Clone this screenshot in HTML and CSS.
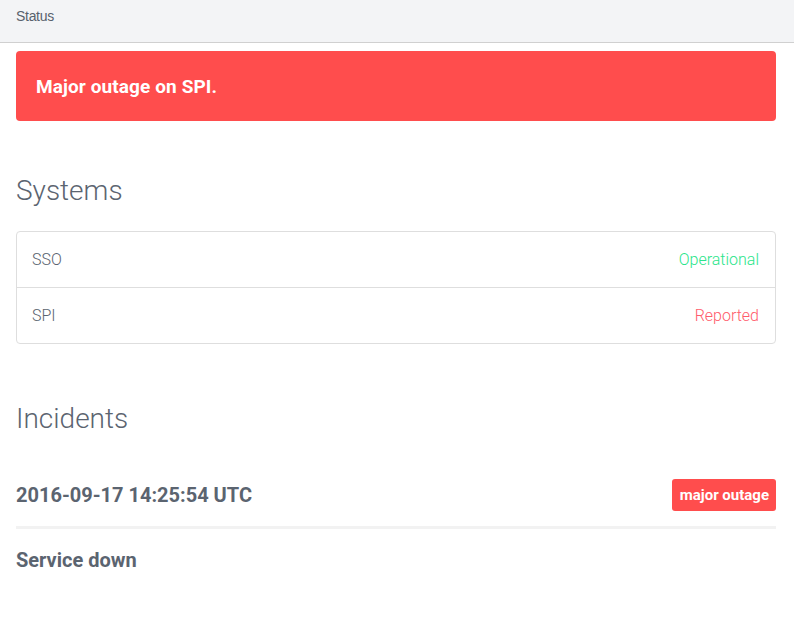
FILE: index.html
```html
<!DOCTYPE html>
<html>
<head>
<meta charset="utf-8">
<link rel="stylesheet" href="styles.css">
</head>
<body>
<header class="topbar"><span class="brand">Status</span></header>
<main class="container">
  <div class="alert">Major outage on SPI.</div>
  <h2 class="section-title systems-title">Systems</h2>
  <ul class="systems">
    <li class="system"><span class="name">SSO</span><span class="state ok">Operational</span></li>
    <li class="system"><span class="name">SPI</span><span class="state bad">Reported</span></li>
  </ul>
  <h2 class="section-title incidents-title">Incidents</h2>
  <div class="incident">
    <div class="incident-head">
      <span class="incident-date">2016-09-17 14:25:54 UTC</span>
      <span class="badge">major outage</span>
    </div>
    <div class="incident-body">Service down</div>
  </div>
</main>
</body>
</html>
```

FILE: styles.css
```css
* { box-sizing: border-box; }
body {
  margin: 0;
  font-family: Roboto, "Noto Sans", sans-serif;
  color: #5b6470;
  background: #fff;
}
.topbar {
  height: 43px;
  background: #f3f4f6;
  border-bottom: 1px solid #d0d0d0;
  display: flex;
  align-items: center;
  padding: 0 16px 10px;
}
.brand {
  font-family: "Liberation Sans", Arial, sans-serif;
  font-size: 14px;
  color: #58616d;
  letter-spacing: -0.3px;
}
.container {
  padding: 8px 18px 0 16px;
}
.alert {
  height: 70px;
  background: #ff4d4d;
  border-radius: 4px;
  color: #fff;
  font-weight: 700;
  font-size: 19px;
  letter-spacing: 0.1px;
  display: flex;
  align-items: center;
  padding: 0 20px;
}
.section-title {
  margin: 0;
  font-weight: 300;
  font-size: 28px;
  line-height: 36px;
  color: #5b6470;
}
.systems-title { margin-top: 52px; }
.systems {
  list-style: none;
  margin: 22px 0 0;
  padding: 0;
  border: 1px solid #dedede;
  border-radius: 4px;
}
.system {
  box-sizing: content-box;
  height: 55px;
  display: flex;
  justify-content: space-between;
  align-items: center;
  padding: 0 16px 0 15px;
  font-size: 16px;
  font-weight: 300;
}
.system + .system { border-top: 1px solid #dedede; }
.name { color: #5b6470; }
.ok { color: #2ae58a; }
.bad { color: #ff5b6b; }
.incidents-title { margin-top: 57px; }
.incident { margin-top: 42px; }
.incident-head {
  display: flex;
  justify-content: space-between;
  align-items: center;
  padding-bottom: 15px;
  border-bottom: 3px solid #f2f2f2;
}
.incident-date {
  font-size: 20px;
  font-weight: 700;
  color: #5b6470;
}
.badge {
  background: #ff4d4d;
  color: #fff;
  font-weight: 700;
  font-size: 15px;
  border-radius: 3px;
  padding: 0 7px 0 8px;
  height: 32px;
  line-height: 32px;
}
.incident-body {
  margin-top: 19px;
  font-size: 20px;
  font-weight: 700;
  color: #5b6470;
}
```
